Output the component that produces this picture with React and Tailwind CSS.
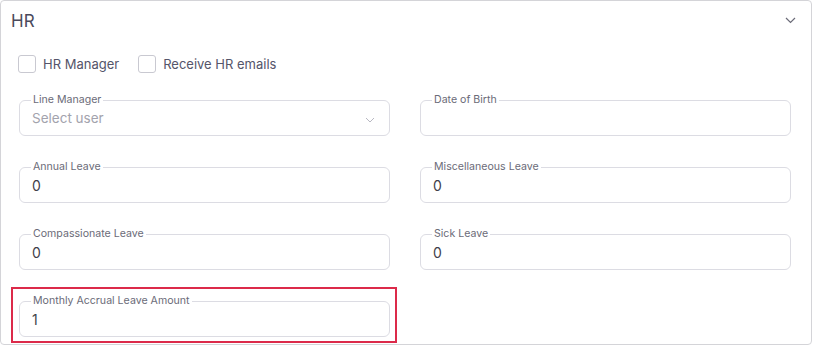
import React from "react";

function Field({ label, value, placeholder, select, highlight }) {
  return (
    <div className="relative">
      {highlight && (
        <div className="pointer-events-none absolute -left-[8px] -top-[8px] -right-[7px] -bottom-[6px] border-2 border-[#dc2a4a]" />
      )}
      <fieldset className="relative m-0 h-[42px] rounded-[6px] border border-[#dcdce3] px-[11px] py-0">
        <legend className="px-[2px] text-[10.6px] leading-[12px] text-[#6b6b78]">{label}</legend>
        <div className="flex h-[29px] items-start pt-[3px] pl-[1px]">
          {placeholder ? (
            <span className="text-[13.5px] leading-[18px] text-[#a3a3ad]">{placeholder}</span>
          ) : (
            <span className="text-[14px] leading-[20px] text-[#3f3f4a]">{value}</span>
          )}
        </div>
        {select && (
          <svg className="absolute right-[14px] top-[11px]" width="10" height="6" viewBox="0 0 10 6" fill="none">
            <path d="M1 1l4 4 4-4" stroke="#b8b8c2" strokeWidth="1" />
          </svg>
        )}
      </fieldset>
    </div>
  );
}

function Check({ label }) {
  return (
    <label className="flex items-center gap-[7px]">
      <span className="h-[18px] w-[18px] rounded-[3px] border border-[#c9c9d1] bg-white" />
      <span className="text-[13px] leading-[18px] text-[#55556a]">{label}</span>
    </label>
  );
}

export default function App() {
  return (
    <div className="h-[346px] w-[813px] bg-white" style={{ fontFamily: "Inter, 'Noto Sans', sans-serif" }}>
      <div className="flex h-[345px] w-[812px] flex-col rounded-[4px] border border-[#d4d4d8]">
        <div className="flex h-[39px] items-center justify-between pl-[10px] pr-[15px]">
          <span className="text-[17px] leading-[20px] text-[#4a4a5c]">HR</span>
          <svg width="11" height="7" viewBox="0 0 11 7" fill="none">
            <path d="M1 1l4.5 4.5L10 1" stroke="#6b6b78" strokeWidth="1.2" />
          </svg>
        </div>
        <div className="mt-[15px] flex items-center gap-[19px] pl-[17px]">
          <Check label="HR Manager" />
          <Check label="Receive HR emails" />
        </div>
        <div className="mt-[21px] grid grid-cols-[371px_371px] gap-x-[30px] gap-y-[25px] pl-[18px]">
          <Field label="Line Manager" placeholder="Select user" select />
          <Field label="Date of Birth" value="" />
          <Field label="Annual Leave" value="0" />
          <Field label="Miscellaneous Leave" value="0" />
          <Field label="Compassionate Leave" value="0" />
          <Field label="Sick Leave" value="0" />
          <Field label="Monthly Accrual Leave Amount" value="1" highlight />
        </div>
      </div>
    </div>
  );
}
